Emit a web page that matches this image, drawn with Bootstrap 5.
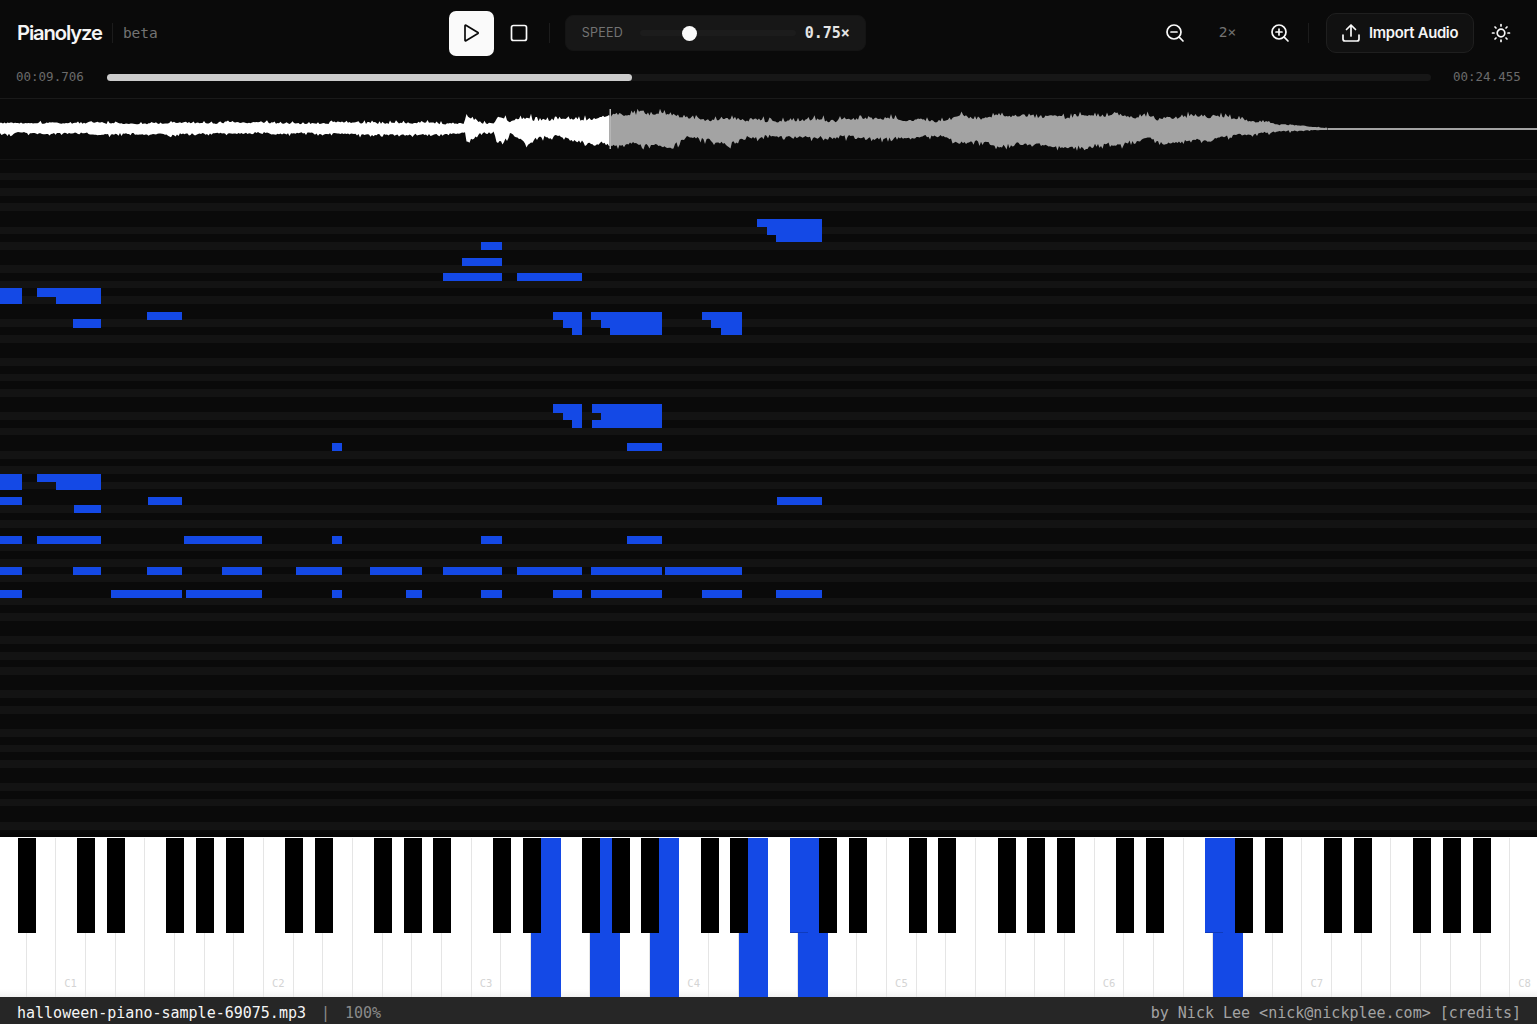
<!DOCTYPE html>
<html lang="en">
<head>
    <meta charset="UTF-8">
    <meta name="viewport" content="width=device-width, initial-scale=1.0">
    <title>Pianolyze</title>
    <link href="https://cdn.jsdelivr.net/npm/bootstrap@5.3.0/dist/css/bootstrap.min.css" rel="stylesheet">
    <script src="https://cdn.jsdelivr.net/npm/bootstrap@5.3.0/dist/js/bootstrap.bundle.min.js"></script>
    <style>
        html, body { height: 100%; overflow: hidden; background: #0a0a0a; }
        body { font-family: "Inter", "Liberation Sans", sans-serif; color: #fafafa; }
        .mono { font-family: "DejaVu Sans Mono", "Liberation Mono", monospace; }

        .app-shell { width: 1537px; height: 1024px; }

        /* top bar */
        .top-bar { height: 66px; padding: 0 26px 0 17px; }
        .brand { font-size: 20.2px; font-weight: 600; letter-spacing: -0.055em; color: #f5f5f5; }
        .tiny-divider { width: 1px; height: 20px; background: #1c1c1c; }
        .brand-gap { margin: 0 10px; }
        .beta-tag { font-size: 14.5px; color: #737373; padding-top: 1px; }
        .center-group { margin-left: 291px; }
        .play-btn { width: 45px; height: 45px; border-radius: 7px; background: #fafafa; border: 0; padding: 0; }
        .plain-btn { background: none; border: 0; padding: 0; color: #fafafa; line-height: 0; }
        .stop-btn { margin-left: 16px; }
        .stop-gap { margin-left: 21px; }
        .speed-box { width: 301px; height: 36px; background: #171717; border-radius: 8px; padding: 0 15px 0 16px; margin-left: 15px; border: 1px solid #141414; }
        .speed-label { font-size: 12.5px; letter-spacing: 0.02em; color: #737373; width: 58px; }
        .speed-track { width: 156px; height: 6px; background: #1c1c1c; border-radius: 3px; position: relative; }
        .speed-thumb { position: absolute; left: 42px; top: -4.5px; width: 15px; height: 15px; border-radius: 50%; background: #fafafa; }
        .speed-value { font-size: 15px; font-weight: 700; color: #e5e5e5; margin-left: auto; }
        .zoom-value { font-size: 14.5px; color: #737373; width: 85px; text-align: center; }
        .import-gap { margin: 0 17px 0 18px; }
        .import-btn { height: 40px; width: 148px; border: 1px solid #1f1f1f; border-radius: 10px; background: #111; color: #f5f5f5; font-size: 14.8px; font-weight: 600; letter-spacing: -0.02em; padding: 0 0 0 14px; }
        .theme-btn { margin-left: 17px; }

        /* progress */
        .progress-row { height: 32px; padding: 0 16px 9px; }
        .time-text { font-size: 12.5px; color: #6b6b6b; width: 68px; }
        .seek-track { height: 7px; background: #171717; border-radius: 4px; margin: 0 22px 0 23px; }
        .seek-fill { width: 525px; height: 100%; background: #cccccc; border-radius: 4px; }

        /* waveform */
        .wave-box { height: 62px; border-top: 1px solid #1a1a1a; border-bottom: 1px solid #141414; }
        .wave-box svg, .roll-box svg { display: block; }

        /* piano roll */
        .roll-box { height: 677px; overflow: hidden; position: relative; }
        .roll-box::after { content: ""; position: absolute; left: 0; right: 0; bottom: 0; height: 7px; background: linear-gradient(rgba(0,0,0,0), rgba(0,0,0,.5)); }

        /* keyboard */
        .keyboard { height: 160px; position: relative; overflow: hidden; background: #fff; padding-top: 1px; }
        .white-row { display: flex; height: 100%; margin-left: -3.1px; }
        .white-key { flex: 0 0 29.68px; border-right: 1px solid #e5e5e5; position: relative; background: linear-gradient(#fff calc(100% - 8px), #f2f2f2); }
        .white-key.on { background: #1449e6; border-right-color: #1449e6; }
        .key-name { position: absolute; left: 0; right: 0; bottom: 8px; text-align: center; font-size: 10.5px; line-height: 12px; color: #d4d4d4; }
        .black-key { position: absolute; top: 1px; height: 95px; width: 17.6px; background: #000; }
        .black-key.on { background: #1449e6; box-shadow: inset 0 -1px 0 #0f3bbd; }

        /* footer */
        .foot-bar { height: 27px; background: #262626; padding: 5px 16px 0 17px; font-size: 15px; }
        .foot-file { color: #f5f5f5; }
        .foot-sep { margin: 0 15px; }
        .foot-muted { color: #a3a3a3; }
        .foot-dim { color: #8a8a8a; }
    </style>
</head>
<body>
    <div class="app-shell d-flex flex-column">
        <!-- barra superior -->
        <div class="top-bar d-flex align-items-center">
            <span class="brand">Pianolyze</span>
            <span class="tiny-divider brand-gap"></span>
            <span class="beta-tag mono">beta</span>

            <div class="center-group d-flex align-items-center">
                <button class="play-btn d-flex align-items-center justify-content-center" aria-label="Play">
                    <svg width="20" height="20" viewBox="0 0 20 20" fill="none" stroke="#0a0a0a" stroke-width="1.7" stroke-linejoin="round"><path d="M4 2.800v14.400a.6.6 0 0 0 .9.5l12-7.200a.6.6 0 0 0 0-1L4.900 2.300a.6.6 0 0 0-.9.5z"/></svg>
                </button>
                <button class="plain-btn stop-btn" aria-label="Stop">
                    <svg width="18" height="18" viewBox="0 0 18 18" fill="none" stroke="#fafafa" stroke-width="1.7"><rect x="1.500" y="1.500" width="15" height="15" rx="2"/></svg>
                </button>
                <span class="tiny-divider stop-gap"></span>
                <div class="speed-box d-flex align-items-center">
                    <span class="speed-label">SPEED</span>
                    <div class="speed-track"><div class="speed-thumb"></div></div>
                    <span class="speed-value mono">0.75×</span>
                </div>
            </div>

            <div class="d-flex align-items-center ms-auto">
                <button class="plain-btn" aria-label="Zoom out">
                    <svg width="20" height="20" viewBox="0 0 20 20" fill="none" stroke="#fafafa" stroke-width="1.7" stroke-linecap="round"><circle cx="9" cy="9" r="7"/><path d="M14.200 14.200 18 18M6 9h6"/></svg>
                </button>
                <span class="zoom-value mono">2×</span>
                <button class="plain-btn" aria-label="Zoom in">
                    <svg width="20" height="20" viewBox="0 0 20 20" fill="none" stroke="#fafafa" stroke-width="1.7" stroke-linecap="round"><circle cx="9" cy="9" r="7"/><path d="M14.200 14.200 18 18M6 9h6M9 6v6"/></svg>
                </button>
                <span class="tiny-divider import-gap"></span>
                <button class="import-btn d-flex align-items-center">
                    <svg class="me-2" width="20" height="20" viewBox="0 0 20 20" fill="none" stroke="#fafafa" stroke-width="1.7" stroke-linecap="round" stroke-linejoin="round"><path d="M2 12v4a2 2 0 0 0 2 2h12a2 2 0 0 0 2-2v-4M10 13V2M5.500 6.500 10 2l4.500 4.500"/></svg>
                    Import Audio
                </button>
                <button class="plain-btn theme-btn" aria-label="Theme">
                    <svg width="20" height="20" viewBox="0 0 20 20" fill="none" stroke="#fafafa" stroke-width="1.7" stroke-linecap="round"><circle cx="10" cy="10" r="3.800"/><path d="M10 1.500v1.500M10 17v1.500M1.500 10H3M17 10h1.500M4 4l1 1M15 15l1 1M4 16l1-1M15 5l1-1"/></svg>
                </button>
            </div>
        </div>

        <!-- progreso -->
        <div class="progress-row d-flex align-items-center">
            <span class="time-text mono">00:09.706</span>
            <div class="seek-track flex-grow-1"><div class="seek-fill"></div></div>
            <span class="time-text mono">00:24.455</span>
        </div>

        <!-- forma de onda -->
        <div class="wave-box">
            <svg id="wave" width="1537" height="60" viewBox="0 99 1537 60"></svg>
        </div>

        <!-- piano roll -->
        <div class="roll-box">
            <svg id="roll" width="1537" height="677" viewBox="0 160 1537 677" shape-rendering="crispEdges"></svg>
        </div>

        <!-- teclado -->
        <div class="keyboard" id="keyboard">
            <div class="white-row" id="whiteRow"></div>
        </div>

        <!-- pie -->
        <div class="foot-bar mono d-flex align-items-center">
            <span class="foot-file">halloween-piano-sample-69075.mp3</span>
            <span class="foot-dim foot-sep">|</span>
            <span class="foot-dim">100%</span>
            <span class="foot-muted ms-auto">by Nick Lee &lt;nick@nickplee.com&gt; [credits]</span>
        </div>
    </div>

    <script>
        const NS = 'http://www.w3.org/2000/svg';
        const BLUE = '#1449e6';

        // ---- piano roll: filas de 7.73px, k=0 en y=218.9
        const rowH = 7.73, rowY = k => 218.9 + rowH * k;
        const roll = document.getElementById('roll');
        function addRect(parent, x, y, w, h, fill) {
            const r = document.createElementNS(NS, 'rect');
            r.setAttribute('x', x); r.setAttribute('y', y);
            r.setAttribute('width', w); r.setAttribute('height', h);
            r.setAttribute('fill', fill);
            parent.appendChild(r);
        }
        const blackPc = [1, 3, 6, 8, 10];
        for (let k = -8; k < 80; k++) {
            const midi = 100 - k;
            if (blackPc.includes(midi % 12)) addRect(roll, 0, rowY(k), 1537, rowH, '#131313');
        }
        // [x inicial, x final, fila]
        const notes = [
            [757,822,0],[767,822,1],[776,822,2],
            [481,502,3],[462,502,5],[443,502,7],[517,582,7],
            [0,22,9],[0,22,10],[37,101,9],[56,101,10],
            [147,182,12],[73,101,13],
            [553,582,12],[563,582,13],[572,582,14],
            [591,662,12],[601,662,13],[610,662,14],
            [702,742,12],[711,742,13],[721,742,14],
            [553,582,24],[563,582,25],[572,582,26],
            [592,662,24],[601,662,25],[592,662,26],
            [627,662,29],[332,342,29],
            [0,22,33],[0,22,34],[37,101,33],[56,101,34],
            [0,22,36],[148,182,36],[777,822,36],[74,101,37],
            [0,22,41],[37,101,41],[184,262,41],[332,342,41],[481,502,41],[627,662,41],
            [0,22,45],[73,101,45],[147,182,45],[222,262,45],[296,342,45],[370,422,45],
            [443,502,45],[517,582,45],[591,662,45],[665,742,45],
            [0,22,48],[111,182,48],[186,262,48],[332,342,48],[406,422,48],[481,502,48],
            [553,582,48],[591,662,48],[702,742,48],[776,822,48]
        ];
        notes.forEach(n => addRect(roll, n[0], rowY(n[2]), n[1] - n[0], rowH + 0.4, BLUE));

        // ---- waveform: envolvente [x, arriba, abajo]
        const env = [
            [0,124,133],[60,123,133],[120,123,134],[175,123,134],[300,123,133],[400,123,134],[465,124,133],
            [467,116,141],[480,122,135],[495,123,134],[497,118,142],[510,122,135],[527,118,144],[540,122,135],
            [555,122,136],[570,118,139],[585,119,141],[610,117,145],
            [612,116,145],[630,117,143],[642,114,145],[657,113,145],[672,117,147],[690,119,137],[700,120,137],
            [728,118,145],[745,120,137],[760,121,136],[800,120,137],[850,120,136],[875,118,139],[900,120,137],
            [945,121,136],[960,115,144],[975,118,142],[1000,115,145],[1017,118,142],[1049,116,147],[1065,117,147],
            [1080,114,146],[1100,116,145],[1112,114,144],[1135,117,141],[1150,118,138],[1168,118,143],[1190,118,140],
            [1210,118,140],[1230,119,136],[1250,122,134],[1270,124,133],[1290,125,131],[1310,127,130],[1328,128,130]
        ];
        function lerpEnv(x) {
            let i = 0;
            while (i < env.length - 2 && env[i + 1][0] < x) i++;
            const a = env[i], b = env[i + 1], t = Math.min(1, (x - a[0]) / (b[0] - a[0]));
            return [a[1] + (b[1] - a[1]) * t, a[2] + (b[2] - a[2]) * t];
        }
        // ruido fijo para que salga siempre igual
        let seed = 12345;
        function rnd() { seed = (seed * 16807) % 2147483647; return seed / 2147483647; }
        function noise(amp) { return (rnd() - 0.5) * amp + Math.pow(rnd(), 5) * amp * 2.2; }
        const topPts = [], botPts = [];
        let blockTop = 0, blockBot = 0;
        for (let x = 0, n = 0; x <= 1328; x += 1.5, n++) {
            const e = lerpEnv(x);
            let amp = x < 465 ? 1.2 : 2.2;
            if (x > 1230) amp *= Math.max(0.1, (1328 - x) / 98);
            // saltos cada ~15px, como los ataques de las notas
            if (n % 10 === 0) { blockTop = (rnd() - 0.5) * amp * 1.6; blockBot = (rnd() - 0.5) * amp * 1.6; }
            topPts.push([x, e[0] - noise(amp) + blockTop]);
            botPts.push([x, e[1] + noise(amp) + blockBot]);
        }
        function wavePath(from, to) {
            const t = topPts.filter(p => p[0] >= from && p[0] <= to);
            const b = botPts.filter(p => p[0] >= from && p[0] <= to).reverse();
            return 'M' + t.concat(b).map(p => p[0].toFixed(1) + ' ' + p[1].toFixed(1)).join('L') + 'Z';
        }
        const wave = document.getElementById('wave');
        wave.innerHTML =
            '<path d="' + wavePath(0, 611) + '" fill="#ffffff"/>' +
            '<path d="' + wavePath(609, 1329) + '" fill="#a3a3a3"/>' +
            '<rect x="1328" y="128" width="209" height="2" fill="#a3a3a3"/>' +
            '<rect x="609.500" y="109" width="1.500" height="40" fill="#b5b5b5"/>';

        // ---- teclado
        const whiteRow = document.getElementById('whiteRow');
        const keyboard = document.getElementById('keyboard');
        const onWhite = [18, 20, 22, 25, 27, 41];
        const letters = ['A','B','C','D','E','F','G'];
        for (let i = 0; i < 52; i++) {
            const key = document.createElement('div');
            key.className = 'white-key' + (onWhite.includes(i) ? ' on' : '');
            if (letters[i % 7] === 'C') {
                const name = document.createElement('span');
                name.className = 'key-name mono';
                name.textContent = 'C' + ((i + 5) / 7);
                key.appendChild(name);
            }
            whiteRow.appendChild(key);
        }
        const blackKeys = [18,77,107,166,196,226,285,315,374,404,433,493,523,582,612,641,701,730,790,819,849,909,938,998,1027,1057,1116,1146,1205,1235,1265,1324,1354,1413,1443,1473];
        blackKeys.forEach(x => {
            const key = document.createElement('div');
            key.className = 'black-key' + (x === 790 || x === 1205 ? ' on' : '');
            key.style.left = x + 'px';
            keyboard.appendChild(key);
        });
    </script>
</body>
</html>
